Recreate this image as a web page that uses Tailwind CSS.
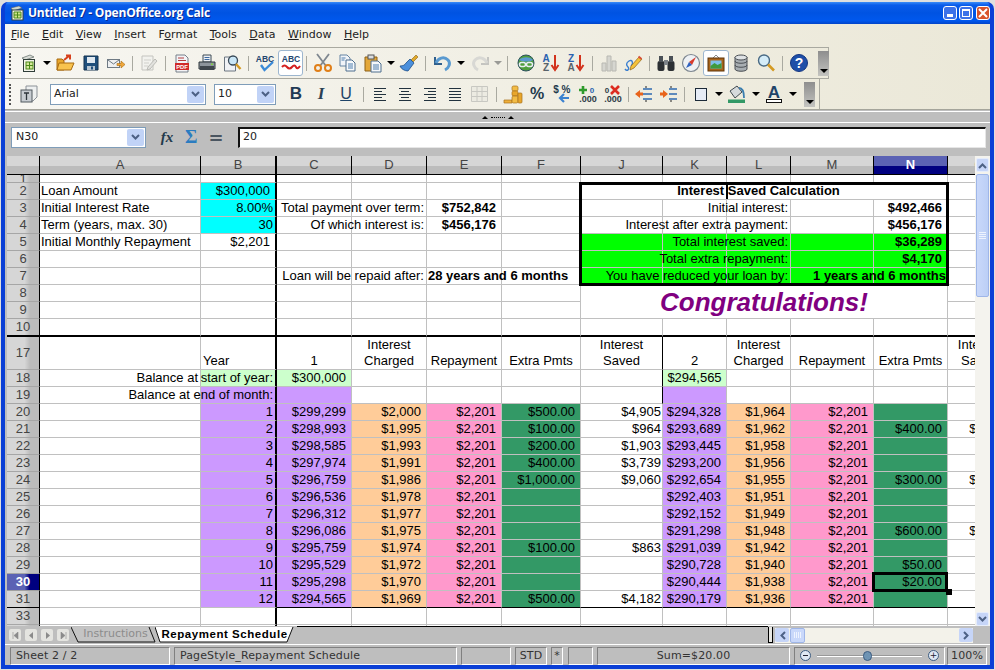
<!DOCTYPE html>
<html lang="en">
<head>
    <meta charset="UTF-8">
    <title>Untitled 7 - OpenOffice.org Calc</title>
    <script src="https://cdn.jsdelivr.net/npm/@tailwindcss/browser@4"></script>
</head>
<body class="bg-[#dfdfdf] overflow-hidden font-['DejaVu_Sans',sans-serif] text-[11px] text-[#222]">
<div class="w-[995px] h-[670px] pt-[2px] pl-[1px]">
<div class="w-[993px] h-[667px] flex flex-col rounded-t-[7px] bg-[#0a3fd6] overflow-hidden border-x-4 border-b-4 border-[#0a3fd6]">

    <!-- title bar -->
    <div class="-mx-[4px] h-[22px] flex-none flex items-center pl-[8px] pr-[4px] bg-[linear-gradient(#3a8cf8_0%,#0a5cea_14%,#0053e2_50%,#0058ee_85%,#0244c8_100%)]">
        <svg class="w-[16px] h-[16px] flex-none" viewBox="0 0 16 16"><path d="M2 3l8-2 3 2-9 3z" fill="#cfd8cf" stroke="#555" stroke-width=".5"/><rect x="3" y="5" width="11" height="10" fill="#f4f4e8" stroke="#33433a"/><path d="M5 7h7v6H5z" fill="#cfe58a" stroke="#4c8a18"/><path d="M8.5 7v6M5 10h7" stroke="#4c8a18"/></svg>
        <span class="ml-[3px] text-white font-bold text-[12px] tracking-[-.2px] font-['Open_Sans',sans-serif] [text-shadow:1px_1px_0_#0a2a90]">Untitled 7 - OpenOffice.org Calc</span>
        <div class="ml-auto flex gap-[2px]">
            <div class="w-[14px] h-[14px] rounded-[3px] border border-white bg-[#3c72e8] flex items-end pl-[3px] pb-[2px]"><div class="w-[6px] h-[3px] bg-white"></div></div>
            <div class="w-[14px] h-[14px] rounded-[3px] border border-white bg-[#3c72e8] flex items-center justify-center"><div class="w-[8px] h-[8px] border border-t-2 border-white"></div></div>
            <div class="ml-[1px] w-[14px] h-[14px] rounded-[3px] border border-white bg-[#d8532c] flex items-center justify-center"><svg class="w-[10px] h-[10px]" viewBox="0 0 10 10"><path d="M1 1l8 8M9 1l-8 8" stroke="#fff" stroke-width="2"/></svg></div>
        </div>
    </div>

    <!-- menu and toolbars share one gradient -->
    <div class="h-[86px] flex-none bg-gradient-to-r from-[#f7f6f1] to-[#ebe8d8] border-b border-[#a5a59b]">
        <div class="h-[23px] flex items-center pl-[6px] gap-[12.5px] text-[#222] text-[11px]">
            <span><u>F</u>ile</span><span><u>E</u>dit</span><span><u>V</u>iew</span><span><u>I</u>nsert</span><span>F<u>o</u>rmat</span><span><u>T</u>ools</span><span><u>D</u>ata</span><span><u>W</u>indow</span><span><u>H</u>elp</span>
        </div>

        <!-- standard toolbar -->
        <div class="w-[824px] h-[32px] flex items-center border-y border-r border-[#a9a9a0] pl-[4px]">
            <div class="flex-none w-[7px] h-[21px] border-l-2 border-dotted border-[#555]"></div>
            <div class="flex-none w-[25px] flex justify-center"><svg class="w-[20px] h-[20px]" viewBox="0 0 20 20"><path d="M3 5l8-3 4 2-9 3z" fill="#d9dcd6" stroke="#5f6a66" stroke-width=".7"/><rect x="4.5" y="6.5" width="11" height="12" fill="#f4f4ea" stroke="#2f3d38"/><rect x="7" y="9" width="7" height="7" fill="#d5e79a" stroke="#4c8a18"/><path d="M10.5 9v7M7 12.5h7" stroke="#4c8a18"/></svg></div>
            <div class="flex-none w-[11px] flex justify-center"><div class="w-0 h-0 border-x-[4px] border-t-[4px] border-x-transparent border-t-black"></div></div>
            <div class="flex-none w-[26px] flex justify-center"><svg class="w-[20px] h-[20px]" viewBox="0 0 20 20"><path d="M2 6h5l2 2v9H2z" fill="#e8a62c" stroke="#a86a10"/><path d="M4 10h15l-3 7H2z" fill="#f8c34e" stroke="#a86a10"/><path d="M9 7l5-4M11 2.500h4v4" fill="none" stroke="#d6401c" stroke-width="2"/></svg></div>
            <div class="flex-none w-[25px] flex justify-center"><svg class="w-[20px] h-[20px]" viewBox="0 0 20 20"><path d="M3 3h14v14H3z" fill="#1f4f7c" stroke="#14324f"/><rect x="6" y="4" width="8" height="6" fill="#dfe8f0"/><rect x="6" y="13" width="8" height="4" fill="#b8c6d2"/><rect x="10" y="13.500" width="2" height="3" fill="#1f4f7c"/></svg></div>
            <div class="flex-none w-[25px] flex justify-center"><svg class="w-[20px] h-[20px]" viewBox="0 0 20 20"><rect x="1.500" y="6.500" width="12" height="8" fill="#eef0f2" stroke="#6f7a84"/><path d="M2 7l5.500 4L13 7" fill="none" stroke="#6f7a84"/><path d="M11 10.500h4V8l4 3.500-4 3.500v-2.500h-4z" fill="#f0a83a" stroke="#a86a10" stroke-width=".6"/></svg></div>
            <div class="flex-none w-[8px] flex justify-center"><div class="w-px h-[15px] bg-[#a9a9a0]"></div></div>
            <div class="flex-none w-[25px] flex justify-center"><svg class="w-[20px] h-[20px]" viewBox="0 0 20 20"><path d="M3 3h11v14H3z" fill="#f2f2ee" stroke="#c4c4bf"/><path d="M5 7h7M5 10h5M5 13h4" stroke="#d0d0cb"/><path d="M9 14l7-8 2 2-7 8-3 1z" fill="#e2e2de" stroke="#bcbcb7"/></svg></div>
            <div class="flex-none w-[8px] flex justify-center"><div class="w-px h-[15px] bg-[#a9a9a0]"></div></div>
            <div class="flex-none w-[25px] flex justify-center"><svg class="w-[20px] h-[20px]" viewBox="0 0 20 20"><path d="M4 2h9l3 3v14H4z" fill="#f3f3f6" stroke="#77808a"/><path d="M6 5h6M6 7.500h8" stroke="#b43c3c"/><rect x="3" y="10" width="14" height="7" fill="#d02a2a"/><text x="10" y="15.800" text-anchor="middle" font-size="5.800" font-weight="700" fill="#fff" font-family="Liberation Sans">PDF</text></svg></div>
            <div class="flex-none w-[25px] flex justify-center"><svg class="w-[20px] h-[20px]" viewBox="0 0 20 20"><path d="M6 2h8v7H6z" fill="#eef1f5" stroke="#3d4a55"/><path d="M7.500 4.500h5M7.500 6.500h5" stroke="#3d6aa0"/><path d="M2 9h16v7H2z" fill="#8d949b" stroke="#2e363c"/><path d="M3 13h14v4H3z" fill="#3f464c"/><rect x="14" y="10.500" width="2" height="1.500" fill="#7fd040"/></svg></div>
            <div class="flex-none w-[25px] flex justify-center"><svg class="w-[20px] h-[20px]" viewBox="0 0 20 20"><path d="M2.500 4h9l2 2v12h-11z" fill="#f0f2f5" stroke="#6c7680"/><circle cx="11" cy="7.500" r="4.500" fill="#c9e6f6" stroke="#3a4a58" stroke-width="1.300"/><path d="M14 11l4.500 5" stroke="#d49a22" stroke-width="2.400"/></svg></div>
            <div class="flex-none w-[8px] flex justify-center"><div class="w-px h-[15px] bg-[#a9a9a0]"></div></div>
            <div class="flex-none w-[26px] flex justify-center"><svg class="w-[22px] h-[20px]" viewBox="0 0 22 20"><text x="11" y="9" text-anchor="middle" font-size="8.500" font-weight="700" fill="#24466f" font-family="Liberation Sans">ABC</text><path d="M7 12l3.500 5L19 9" fill="none" stroke="#3b8ad8" stroke-width="2.400"/></svg></div>
            <div class="flex-none w-[25px] h-[26px] rounded-[3px] border border-[#9db6cf] bg-white flex justify-center items-center"><svg class="w-[22px] h-[20px]" viewBox="0 0 22 20"><text x="11" y="9" text-anchor="middle" font-size="8.500" font-weight="700" fill="#24466f" font-family="Liberation Sans">ABC</text><path d="M2 14q2.500-3 5 0t5 0 4 0 4-1" fill="none" stroke="#d42020" stroke-width="2"/></svg></div>
            <div class="flex-none w-[7px] flex justify-center"><div class="w-px h-[15px] bg-[#a9a9a0]"></div></div>
            <div class="flex-none w-[25px] flex justify-center"><svg class="w-[20px] h-[20px]" viewBox="0 0 20 20"><path d="M4 1l9 12M16 1L7 13" stroke="#808890" stroke-width="1.800"/><circle cx="5" cy="15" r="3" fill="none" stroke="#e07f18" stroke-width="2"/><circle cx="15" cy="15" r="3" fill="none" stroke="#e07f18" stroke-width="2"/></svg></div>
            <div class="flex-none w-[25px] flex justify-center"><svg class="w-[20px] h-[20px]" viewBox="0 0 20 20"><path d="M2 2h7l3 3v8H2z" fill="#f1f4f8" stroke="#6583a2"/><path d="M8 7h6l3 3v8H8z" fill="#f7f9fb" stroke="#4e6e8e"/><path d="M3.500 5h4M3.500 7h3M10 11h5M10 13h5M10 15h5" stroke="#4e7fae"/></svg></div>
            <div class="flex-none w-[25px] flex justify-center"><svg class="w-[20px] h-[20px]" viewBox="0 0 20 20"><path d="M2 4h12v14H2z" fill="#e4a83a" stroke="#8c6118"/><rect x="5" y="2" width="6" height="4" fill="#dadde0" stroke="#555"/><path d="M8 8h7l3 3v8H8z" fill="#f4f7fa" stroke="#4e6e8e"/><path d="M10 12h6M10 14h6M10 16h6" stroke="#4e7fae"/></svg></div>
            <div class="flex-none w-[11px] flex justify-center"><div class="w-0 h-0 border-x-[4px] border-t-[4px] border-x-transparent border-t-black"></div></div>
            <div class="flex-none w-[25px] flex justify-center"><svg class="w-[20px] h-[20px]" viewBox="0 0 20 20"><path d="M17 2l2 2-5 5-2-2z" fill="#e0a92a" stroke="#8c6118" stroke-width=".6"/><path d="M11 6l4 4-6 8c-3 0-7-2-8-5 3 0 5-1 6-3z" fill="#4c90dc" stroke="#1f4f88" stroke-width=".8"/></svg></div>
            <div class="flex-none w-[9px] flex justify-center"><div class="w-px h-[15px] bg-[#a9a9a0]"></div></div>
            <div class="flex-none w-[25px] flex justify-center"><svg class="w-[20px] h-[20px]" viewBox="0 0 20 20"><path d="M2 4v7h7" fill="none" stroke="#2f5f8c" stroke-width="2"/><path d="M3 10c2-5 8-7 12-3 3 3 1 8-3 10" fill="none" stroke="#5a9ad0" stroke-width="3"/></svg></div>
            <div class="flex-none w-[11px] flex justify-center"><div class="w-0 h-0 border-x-[4px] border-t-[4px] border-x-transparent border-t-black"></div></div>
            <div class="flex-none w-[27px] flex justify-center"><svg class="w-[20px] h-[20px]" viewBox="0 0 20 20"><path d="M18 4v7h-7" fill="none" stroke="#c4c4c0" stroke-width="2"/><path d="M17 10C15 5 9 3 5 7c-3 3-1 8 3 10" fill="none" stroke="#d8d8d4" stroke-width="3"/></svg></div>
            <div class="flex-none w-[9px] flex justify-center"><div class="w-0 h-0 border-x-[4px] border-t-[4px] border-x-transparent border-t-[#9a9a96]"></div></div>
            <div class="flex-none w-[11px] flex justify-center"><div class="w-px h-[15px] bg-[#a9a9a0]"></div></div>
            <div class="flex-none w-[25px] flex justify-center"><svg class="w-[20px] h-[20px]" viewBox="0 0 20 20"><circle cx="10" cy="10" r="8" fill="#4f9e3c" stroke="#2c4f60"/><path d="M3 7c3-3 10-4 14 0-3 2-10 2-14 0z" fill="#5a9ad0"/><rect x="3.500" y="9.500" width="6" height="4" rx="2" fill="none" stroke="#e8eef2" stroke-width="1.500"/><rect x="10.500" y="9.500" width="6" height="4" rx="2" fill="none" stroke="#e8eef2" stroke-width="1.500"/></svg></div>
            <div class="flex-none w-[25px] flex justify-center"><svg class="w-[20px] h-[20px]" viewBox="0 0 20 20"><text x="5" y="8.500" text-anchor="middle" font-size="10" font-weight="700" fill="#2a62b0" font-family="Liberation Sans">A</text><text x="5" y="18" text-anchor="middle" font-size="10" font-weight="700" fill="#59636b" font-family="Liberation Sans">Z</text><path d="M14 2v13M10.500 12l3.500 5 3.500-5" fill="none" stroke="#d2321c" stroke-width="2"/></svg></div>
            <div class="flex-none w-[25px] flex justify-center"><svg class="w-[20px] h-[20px]" viewBox="0 0 20 20"><text x="5" y="8.500" text-anchor="middle" font-size="10" font-weight="700" fill="#2a62b0" font-family="Liberation Sans">Z</text><text x="5" y="18" text-anchor="middle" font-size="10" font-weight="700" fill="#59636b" font-family="Liberation Sans">A</text><path d="M14 2v13M10.500 12l3.500 5 3.500-5" fill="none" stroke="#d2321c" stroke-width="2"/></svg></div>
            <div class="flex-none w-[8px] flex justify-center"><div class="w-px h-[15px] bg-[#a9a9a0]"></div></div>
            <div class="flex-none w-[25px] flex justify-center"><svg class="w-[20px] h-[20px]" viewBox="0 0 20 20"><path d="M3 10h4v8H3zM8 3h4v15H8zM13 8h4v10h-4z" fill="#d6d6d0" stroke="#b8b8b2"/></svg></div>
            <div class="flex-none w-[24px] flex justify-center"><svg class="w-[20px] h-[20px]" viewBox="0 0 20 20"><path d="M2 16c2 3 5 0 3-2s-2-4 1-6 5 2 2 5" fill="none" stroke="#3b7fd0" stroke-width="1.400"/><path d="M8 13l8-9 3 2-8 9-4 2z" fill="#f4c23a" stroke="#8c6118" stroke-width=".7"/><path d="M15.500 3.500l3 2.500" stroke="#d8503a" stroke-width="2"/></svg></div>
            <div class="flex-none w-[8px] flex justify-center"><div class="w-px h-[15px] bg-[#a9a9a0]"></div></div>
            <div class="flex-none w-[25px] flex justify-center"><svg class="w-[20px] h-[20px]" viewBox="0 0 20 20"><rect x="1.500" y="8" width="7" height="10" rx="2" fill="#2c3034"/><rect x="11.500" y="8" width="7" height="10" rx="2" fill="#2c3034"/><rect x="3" y="3" width="4" height="6" fill="#4a5056"/><rect x="13" y="3" width="4" height="6" fill="#4a5056"/><rect x="8" y="7" width="4" height="5" fill="#7c8288"/></svg></div>
            <div class="flex-none w-[25px] flex justify-center"><svg class="w-[20px] h-[20px]" viewBox="0 0 20 20"><circle cx="10" cy="10" r="8.500" fill="#eef1f4" stroke="#7e8790" stroke-width="1.200"/><path d="M15 4l-4 8-3-3z" fill="#d83a2c"/><path d="M5 15l3-6 3 3z" fill="#2f62c0"/></svg></div>
            <div class="flex-none w-[26px] h-[26px] rounded-[3px] border border-[#9db6cf] bg-white flex justify-center items-center"><svg class="w-[20px] h-[20px]" viewBox="0 0 20 20"><path d="M7 5l3-3 3 3" fill="none" stroke="#8c8c8c"/><rect x="2" y="5" width="16" height="13" fill="#a8641c" stroke="#5e3408"/><rect x="4.500" y="7.500" width="11" height="8" fill="#7fc0e8"/><path d="M4.500 13l4-3 3 2 4-2v5.500h-11z" fill="#3f9a3c"/></svg></div>
            <div class="flex-none w-[24px] flex justify-center"><svg class="w-[20px] h-[20px]" viewBox="0 0 20 20"><path d="M4 4v12c0 3 12 3 12 0V4z" fill="#a8aeb2" stroke="#4a4f54"/><ellipse cx="10" cy="4.500" rx="6" ry="2.500" fill="#dfe2e4" stroke="#4a4f54"/><path d="M4 8c0 3 12 3 12 0M4 12c0 3 12 3 12 0" fill="none" stroke="#4a4f54"/></svg></div>
            <div class="flex-none w-[25px] flex justify-center"><svg class="w-[20px] h-[20px]" viewBox="0 0 20 20"><circle cx="8" cy="7.500" r="5.500" fill="#d4ecf8" stroke="#4a6a84" stroke-width="1.400"/><path d="M12 11.500l6 6" stroke="#d49a22" stroke-width="2.600"/></svg></div>
            <div class="flex-none w-[8px] flex justify-center"><div class="w-px h-[15px] bg-[#a9a9a0]"></div></div>
            <div class="flex-none w-[25px] flex justify-center"><svg class="w-[20px] h-[20px]" viewBox="0 0 20 20"><circle cx="10" cy="10" r="8.500" fill="#1f4fa8" stroke="#143680"/><text x="10" y="15" text-anchor="middle" font-size="14" font-weight="700" fill="#fff" font-family="Liberation Sans">?</text></svg></div>
            <div class="flex-none ml-[7px] w-[11px] h-[25px] bg-gradient-to-b from-[#8e8e8e] to-[#c4c4c0] flex items-end justify-center pb-[3px]"><div class="w-0 h-0 border-x-[4px] border-t-[4px] border-x-transparent border-t-black"></div></div>
        </div>

        <!-- formatting toolbar -->
        <div class="w-[815px] h-[30px] flex items-center border-r border-[#a9a9a0] pl-[4px]">
            <div class="flex-none w-[7px] h-[21px] border-l-2 border-dotted border-[#555]"></div>
            <div class="flex-none w-[25px] flex justify-center"><svg class="w-[20px] h-[20px]" viewBox="0 0 20 20"><path d="M7 2h11v11l-4 4H7z" fill="#eef0f0" stroke="#8c9298"/><rect x="2" y="6" width="11" height="12" fill="#c8cdd2" stroke="#50585e"/><path d="M5 9h5M7.500 9v7" stroke="#2f363c" stroke-width="1.300"/></svg></div>
            <div class="flex-none ml-[9px] w-[156px] h-[21px] bg-white border border-[#7f9db9] flex items-center pl-[3px] text-[11px]">Arial
                <div class="ml-auto mr-[1px] w-[17px] h-[17px] rounded-[2px] bg-[#c1d3f7] flex items-center justify-center"><svg class="w-[9px] h-[7px]" viewBox="0 0 9 7"><path d="M1 1l3.500 3.500L8 1" fill="none" stroke="#4d6185" stroke-width="2"/></svg></div>
            </div>
            <div class="flex-none ml-[8px] w-[62px] h-[21px] bg-white border border-[#7f9db9] flex items-center pl-[3px] text-[11px]">10
                <div class="ml-auto mr-[1px] w-[17px] h-[17px] rounded-[2px] bg-[#c1d3f7] flex items-center justify-center"><svg class="w-[9px] h-[7px]" viewBox="0 0 9 7"><path d="M1 1l3.500 3.500L8 1" fill="none" stroke="#4d6185" stroke-width="2"/></svg></div>
            </div>
            <div class="flex-none ml-[7px] w-[26px] text-center font-bold text-[#1f3a55] text-[17px] font-['Liberation_Sans',sans-serif]">B</div>
            <div class="flex-none w-[24px] text-center italic font-bold text-[#2a3f52] text-[17px] font-['Liberation_Serif',serif]">I</div>
            <div class="flex-none w-[26px] text-center underline text-[#1f4468] text-[16px] font-['Liberation_Sans',sans-serif]">U</div>
            <div class="flex-none w-[8px] flex justify-center"><div class="w-px h-[15px] bg-[#a9a9a0]"></div></div>
            <div class="flex-none w-[25px] flex justify-center"><svg class="w-[14px] h-[14px]" viewBox="0 0 14 14"><path d="M1 1.500h12M1 4.500h8M1 7.500h12M1 10.500h8M1 13.500h12" stroke="#22323e"/></svg></div>
            <div class="flex-none w-[25px] flex justify-center"><svg class="w-[14px] h-[14px]" viewBox="0 0 14 14"><path d="M1 1.500h12M3 4.500h8M1 7.500h12M3 10.500h8M1 13.500h12" stroke="#22323e"/></svg></div>
            <div class="flex-none w-[25px] flex justify-center"><svg class="w-[14px] h-[14px]" viewBox="0 0 14 14"><path d="M1 1.500h12M5 4.500h8M1 7.500h12M5 10.500h8M1 13.500h12" stroke="#22323e"/></svg></div>
            <div class="flex-none w-[25px] flex justify-center"><svg class="w-[14px] h-[14px]" viewBox="0 0 14 14"><path d="M1 1.500h12M1 4.500h12M1 7.500h12M1 10.500h12M1 13.500h12" stroke="#22323e"/></svg></div>
            <div class="flex-none w-[25px] flex justify-center"><svg class="w-[17px] h-[16px]" viewBox="0 0 17 16"><path d="M.5 .5h16v15H.5zM.5 5.500h16M.5 10.500h16M6 .5v15M11 .5v15" fill="#ecebe2" stroke="#c8c8c2"/></svg></div>
            <div class="flex-none w-[8px] flex justify-center"><div class="w-px h-[15px] bg-[#a9a9a0]"></div></div>
            <div class="flex-none w-[25px] flex justify-center"><svg class="w-[20px] h-[20px]" viewBox="0 0 20 20"><path d="M1 16h8v3H1z" fill="#eeb03c" stroke="#a8701a" stroke-width=".7"/><rect x="9" y="2" width="6" height="5" rx="1.500" fill="#f2bc46" stroke="#a8701a" stroke-width=".7"/><rect x="9" y="7" width="6" height="5" rx="1.500" fill="#e8a62c" stroke="#a8701a" stroke-width=".7"/><rect x="9" y="12" width="6" height="7" rx="1.500" fill="#f2bc46" stroke="#a8701a" stroke-width=".7"/><rect x="15" y="9" width="4" height="10" rx="1" fill="#e8a62c" stroke="#a8701a" stroke-width=".7"/></svg></div>
            <div class="flex-none w-[24px] text-center font-bold text-[#233a4c] text-[16px] font-['Liberation_Sans',sans-serif]">%</div>
            <div class="flex-none w-[26px] flex justify-center"><svg class="w-[22px] h-[20px]" viewBox="0 0 22 20"><text x="5" y="9" text-anchor="middle" font-size="10" font-weight="700" fill="#233a4c" font-family="Liberation Sans">$</text><text x="15" y="9" text-anchor="middle" font-size="10" font-weight="700" fill="#233a4c" font-family="Liberation Sans">%</text><path d="M18 14h-8M13 10l-4 4 4 4" fill="none" stroke="#3b82d0" stroke-width="2.200"/></svg></div>
            <div class="flex-none w-[25px] flex justify-center"><svg class="w-[22px] h-[20px]" viewBox="0 0 22 20"><path d="M6 2v8M2 6h8" stroke="#2f9a2c" stroke-width="2.600"/><text x="15" y="9" text-anchor="middle" font-size="8" font-weight="700" fill="#2a62b0" font-family="Liberation Sans">0</text><text x="11" y="18" text-anchor="middle" font-size="9" font-weight="700" fill="#2e3c46" font-family="Liberation Sans">.000</text></svg></div>
            <div class="flex-none w-[25px] flex justify-center"><svg class="w-[22px] h-[20px]" viewBox="0 0 22 20"><text x="5" y="9" text-anchor="middle" font-size="8" font-weight="700" fill="#2e3c46" font-family="Liberation Sans">0</text><path d="M9 2l8 8M17 2l-8 8" stroke="#dc2c20" stroke-width="2.600"/><text x="11" y="18" text-anchor="middle" font-size="9" font-weight="700" fill="#2e3c46" font-family="Liberation Sans">.000</text></svg></div>
            <div class="flex-none w-[6px] flex justify-center"><div class="w-px h-[15px] bg-[#a9a9a0]"></div></div>
            <div class="flex-none w-[25px] flex justify-center"><svg class="w-[20px] h-[20px]" viewBox="0 0 20 20"><path d="M1 10l5-4v2.500h3v3H6V14z" fill="#e8641c"/><path d="M9 5h9M9 10h9M9 15h9" stroke="#2f6ab0" stroke-width="1.500"/><path d="M12 2v2M12 16v2" stroke="#222"/></svg></div>
            <div class="flex-none w-[25px] flex justify-center"><svg class="w-[20px] h-[20px]" viewBox="0 0 20 20"><path d="M9 10L4 6v2.500H1v3h3V14z" fill="#e8641c"/><path d="M10 5h8M10 10h8M10 15h8" stroke="#2f6ab0" stroke-width="1.500"/><path d="M12 2v2M12 16v2" stroke="#222"/></svg></div>
            <div class="flex-none w-[7px] flex justify-center"><div class="w-px h-[15px] bg-[#a9a9a0]"></div></div>
            <div class="flex-none w-[25px] flex justify-center"><div class="w-[12px] h-[13px] bg-[#e6ecf6] border border-[#1c2a38]"></div></div>
            <div class="flex-none w-[11px] flex justify-center"><div class="w-0 h-0 border-x-[4px] border-t-[4px] border-x-transparent border-t-black"></div></div>
            <div class="flex-none w-[26px] flex justify-center"><svg class="w-[20px] h-[20px]" viewBox="0 0 20 20"><path d="M3 7l7-5 5 6-7 6z" fill="#d6dadc" stroke="#404a50"/><path d="M12 4c3 0 5 3 5 10" fill="none" stroke="#3b7fb0" stroke-width="1.800"/><rect x="1" y="15.500" width="17" height="3.500" fill="#339966"/></svg></div>
            <div class="flex-none w-[11px] flex justify-center"><div class="w-0 h-0 border-x-[4px] border-t-[4px] border-x-transparent border-t-black"></div></div>
            <div class="flex-none w-[26px] flex justify-center"><svg class="w-[20px] h-[20px]" viewBox="0 0 20 20"><text x="10" y="13.500" text-anchor="middle" font-size="17" font-weight="700" fill="#1f4468" font-family="Liberation Sans">A</text><rect x="2.500" y="15.500" width="15" height="3" fill="#fff" stroke="#111"/></svg></div>
            <div class="flex-none w-[11px] flex justify-center"><div class="w-0 h-0 border-x-[4px] border-t-[4px] border-x-transparent border-t-black"></div></div>
            <div class="flex-none ml-[6px] w-[11px] h-[25px] bg-gradient-to-b from-[#8e8e8e] to-[#c4c4c0] flex items-end justify-center pb-[3px]"><div class="w-0 h-0 border-x-[4px] border-t-[4px] border-x-transparent border-t-black"></div></div>
        </div>
    </div>

    <div class="flex-1 min-h-0 flex flex-col bg-[#bebebe]">
        <!-- splitter -->
        <div class="h-[12px] flex-none border-t border-white mt-[1px] border-b relative flex items-center justify-center gap-[3px] text-[5px] text-black">
            <div class="w-0 h-0 border-x-[3px] border-b-[3px] border-x-transparent border-b-black"></div>
            <div class="w-[14px] h-px border-t border-dotted border-black"></div>
            <div class="w-0 h-0 border-x-[3px] border-b-[3px] border-x-transparent border-b-black"></div>
        </div>

        <!-- formula bar -->
        <div class="h-[31px] flex-none flex items-center pl-[6px] pr-[4px] pb-[3px] text-[11px]">
            <div class="w-[135px] h-[21px] bg-white border border-[#7f9db9] flex items-center pl-[4px]">N30
                <div class="ml-auto mr-[1px] w-[17px] h-[17px] rounded-[2px] bg-[#c1d3f7] flex items-center justify-center"><svg class="w-[9px] h-[7px]" viewBox="0 0 9 7"><path d="M1 1l3.500 3.500L8 1" fill="none" stroke="#4d6185" stroke-width="2"/></svg></div>
            </div>
            <div class="w-[38px] ml-[2px] text-center italic font-bold text-[#233a4c] text-[15px] font-['Liberation_Serif',serif]">fx</div>
            <div class="w-[10px] -ml-[1px] text-center font-bold text-[#2b7cc0] text-[19px] font-['Liberation_Serif',serif]">Σ</div>
            <div class="w-[42px] text-center font-bold text-[#4a5560] text-[18px]">=</div>
            <div class="ml-[1px] flex-1 h-[21px] bg-white border-t-2 border-l-2 border-[#111] border-b border-r border-b-[#e6e6e6] border-r-[#e6e6e6] flex items-center pl-[3px]">20</div>
        </div>

        <!-- sheet + vertical scrollbar -->
        <div class="h-[472px] flex-none flex pl-[2px] pt-[2px]">
            <div class="w-[968px] h-[470px] relative overflow-hidden bg-white font-['Liberation_Sans',sans-serif] text-[13px] text-black">
                <table id="grid" class="table-fixed w-[1005px] border-separate border-spacing-0 leading-[16px]">
                    <colgroup>
                        <col class="w-[33px]"><col class="w-[161px]"><col class="w-[76px]"><col class="w-[75px]"><col class="w-[75px]"><col class="w-[75px]"><col class="w-[79px]"><col class="w-[82px]"><col class="w-[64px]"><col class="w-[64px]"><col class="w-[83px]"><col class="w-[74px]"><col class="w-[64px]">
                    </colgroup>
                    <tbody id="rows"></tbody>
                </table>
                <!-- calculation box and cell cursor sit over the table -->
                <div class="absolute left-[572px] top-[26px] w-[370px] h-[104px] border-[3px] border-black pointer-events-none"></div>
                <div class="absolute left-[719px] top-[26px] w-[2px] h-[17px] bg-black"></div>
                <div class="absolute left-[865px] top-[416px] w-[76px] h-[20px] border-[3px] border-black"></div>
                <div class="absolute left-[939px] top-[433px] w-[6px] h-[6px] bg-black"></div>
            </div>
            <div class="w-[15px] h-[470px] bg-[#f4f3ee] flex flex-col items-center pt-[2px]">
                <div class="w-[13px] h-[14px] rounded-[2px] bg-[#c6d5f8] border border-[#e6edfc] flex items-center justify-center"><svg class="w-[9px] h-[7px]" viewBox="0 0 9 7"><path d="M1 6l3.500-3.500L8 6" fill="none" stroke="#4d6185" stroke-width="2"/></svg></div>
                <div class="mt-[2px] w-[13px] h-[123px] rounded-[2px] bg-gradient-to-r from-[#c9d8fa] to-[#bccff6] border border-[#9fb6e8] flex flex-col gap-[1px] items-center justify-center">
                    <div class="w-[7px] h-px bg-[#eef3fe]"></div><div class="w-[7px] h-px bg-[#eef3fe]"></div><div class="w-[7px] h-px bg-[#eef3fe]"></div><div class="w-[7px] h-px bg-[#eef3fe]"></div>
                </div>
                <div class="mt-auto w-[13px] h-[14px] rounded-[2px] bg-[#c6d5f8] border border-[#e6edfc] flex items-center justify-center"><svg class="w-[9px] h-[7px]" viewBox="0 0 9 7"><path d="M1 1l3.500 3.500L8 1" fill="none" stroke="#4d6185" stroke-width="2"/></svg></div>
            </div>
        </div>

        <!-- sheet tabs + horizontal scrollbar -->
        <div class="h-[18px] flex-none flex items-center pl-[4px] pr-[17px]">
            <div class="flex gap-[4px] items-center">
                <div class="w-[12px] h-[12px] rounded-[2px] bg-[#e4e4e0] flex items-center justify-center"><svg class="w-[7px] h-[7px]" viewBox="0 0 7 7"><path d="M1 0v7M6 0v7L2 3.500z" fill="#8a8a8a" stroke="#8a8a8a" stroke-width=".6"/></svg></div>
                <div class="w-[12px] h-[12px] rounded-[2px] bg-[#e4e4e0] flex items-center justify-center"><svg class="w-[7px] h-[7px]" viewBox="0 0 7 7"><path d="M5 0v7L1 3.500z" fill="#8a8a8a"/></svg></div>
                <div class="w-[12px] h-[12px] rounded-[2px] bg-[#e4e4e0] flex items-center justify-center"><svg class="w-[7px] h-[7px]" viewBox="0 0 7 7"><path d="M2 0v7l4-3.500z" fill="#8a8a8a"/></svg></div>
                <div class="w-[12px] h-[12px] rounded-[2px] bg-[#e4e4e0] flex items-center justify-center"><svg class="w-[7px] h-[7px]" viewBox="0 0 7 7"><path d="M6 0v7M1 0v7l4-3.500z" fill="#8a8a8a" stroke="#8a8a8a" stroke-width=".6"/></svg></div>
            </div>
            <div class="relative flex-none ml-[2px] w-[87px] h-[16px] flex items-center justify-center text-[#8c8c8c] text-[11px] -mt-[1px]">
                <svg class="absolute inset-0 w-full h-full" viewBox="0 0 87 16"><path d="M0 0L7 15H84L78 0" fill="#c4c4c4" stroke="#111"/></svg>
                <span class="relative ml-[2px]">Instructions</span>
            </div>
            <div class="relative flex-none -ml-[3px] w-[142px] h-[16px] flex items-center justify-center text-black font-bold font-['Liberation_Sans',sans-serif] text-[11.5px] tracking-[.55px] -mt-[1px]">
                <svg class="absolute inset-0 w-full h-full" viewBox="0 0 142 16"><path d="M0 0L5 15H132L138 0" fill="#fff" stroke="#111"/></svg>
                <span class="relative -ml-[3px]">Repayment Schedule</span>
            </div>
            <div class="flex-1 h-[17px] border-t border-black -mt-[1px]"></div>
            <div class="w-[5px] h-[16px] bg-[#e8e8e4] border border-black border-t-0"></div>
            <div class="w-[198px] h-[15px] bg-[#f3f2ea] ml-[2px] flex items-center">
                <div class="w-[14px] h-[14px] rounded-[2px] bg-[#c6d5f8] flex items-center justify-center"><svg class="w-[7px] h-[9px]" viewBox="0 0 7 9"><path d="M6 1L2.500 4.500 6 8" fill="none" stroke="#4d6185" stroke-width="2"/></svg></div>
                <div class="ml-[1px] w-[15px] h-[15px] rounded-[2px] bg-[#c9d8fa] border border-[#9fb6e8] flex gap-px items-center justify-center"><div class="w-px h-[6px] bg-[#eef3fe]"></div><div class="w-px h-[6px] bg-[#eef3fe]"></div><div class="w-px h-[6px] bg-[#eef3fe]"></div><div class="w-px h-[6px] bg-[#eef3fe]"></div></div>
                <div class="ml-auto w-[14px] h-[14px] rounded-[2px] bg-[#c6d5f8] flex items-center justify-center"><svg class="w-[7px] h-[9px]" viewBox="0 0 7 9"><path d="M1 1l3.500 3.500L1 8" fill="none" stroke="#4d6185" stroke-width="2"/></svg></div>
            </div>
        </div>

        <!-- status bar -->
        <div class="h-[22px] flex-none flex items-center border-t border-white pl-[5px] text-[11px] tracking-[.12px] text-[#333]">
            <div class="w-[160px] h-[18px] border border-t-[#808080] border-l-[#808080] border-b-white border-r-white pl-[5px] leading-[16px]">Sheet 2 / 2</div>
            <div class="ml-[4px] w-[283px] h-[18px] border border-t-[#808080] border-l-[#808080] border-b-white border-r-white pl-[5px] leading-[16px]">PageStyle_Repayment Schedule</div>
            <div class="ml-[4px] w-[50px] h-[18px] border border-t-[#808080] border-l-[#808080] border-b-white border-r-white"></div>
            <div class="ml-[4px] w-[32px] h-[18px] border border-t-[#808080] border-l-[#808080] border-b-white border-r-white text-center leading-[16px]">STD</div>
            <div class="ml-[4px] w-[12px] h-[18px] border border-t-[#808080] border-l-[#808080] border-b-white border-r-white text-center leading-[16px]">*</div>
            <div class="ml-[5px] w-[25px] h-[18px] border border-t-[#808080] border-l-[#808080] border-b-white border-r-white"></div>
            <div class="ml-[4px] w-[193px] h-[18px] border border-t-[#808080] border-l-[#808080] border-b-white border-r-white text-center leading-[16px]">Sum=$20.00</div>
            <div class="ml-[4px] w-[151px] h-[18px] border border-t-[#808080] border-l-[#808080] border-b-white border-r-white flex items-center px-[5px]">
                <div class="w-[11px] h-[11px] rounded-full bg-[#dfe8f4] border border-[#3d5c80] flex items-center justify-center"><div class="w-[5px] h-px bg-[#223]"></div></div>
                <div class="relative mx-[6px] flex-1 h-[2px] bg-white border-t border-[#999]"><div class="absolute left-[46px] -top-[5px] w-[9px] h-[10px] rounded-full bg-[#6f94b4] border border-[#3d5c80]"></div></div>
                <div class="w-[11px] h-[11px] rounded-full bg-[#dfe8f4] border border-[#3d5c80] text-center text-[9px] leading-[9px] text-[#223]">+</div>
            </div>
            <div class="ml-[2px] w-[40px] h-[18px] border border-t-[#808080] border-l-[#808080] border-b-white border-r-white text-center leading-[16px]">100%</div>
        </div>
    </div>
</div>
</div>

<script>
    const cols = ["A", "B", "C", "D", "E", "F", "J", "K", "L", "M", "N", "O"];

    // right padding for the accounting format vs plain text
    const money = "justify-end pr-[5px]";
    const right = "justify-end pr-[2px]";
    const left = "justify-start pl-[1px]";
    const center = "justify-center";

    const cyan = "bg-[#00ffff]", lime = "bg-[#00ff00]", mint = "bg-[#ccffcc]", purple = "bg-[#cc99ff]";
    const orange = "bg-[#ffcc99]", pink = "bg-[#ff99cc]", green = "bg-[#339966]";

    function c(text, align, fill, bold) {
        return { text: text, align: align, fill: fill || "", bold: bold ? "font-bold" : "" };
    }

    const sheetRows = [
        { n: "1", td: "h-[8px]", inner: "h-[7px] overflow-hidden", cells: {} },
        { n: "2", cells: { A: c("Loan Amount", left), B: c("$300,000", money, cyan), J: { span: 5, text: "Interest Saved Calculation", align: "justify-center pr-[11px]", fill: "", bold: "font-bold" }, K: null, L: null, M: null, N: null } },
        { n: "3", cells: { A: c("Initial Interest Rate", left), B: c("8.00%", right, cyan), D: c("Total payment over term:", right), E: c("$752,842", money, "", 1), L: c("Initial interest:", right), N: c("$492,466", money, "", 1) } },
        { n: "4", cells: { A: c("Term (years, max. 30)", left), B: c("30", right, cyan), D: c("Of which interest is:", right), E: c("$456,176", money, "", 1), L: c("Interest after extra payment:", right), N: c("$456,176", money, "", 1) } },
        { n: "5", cells: { A: c("Initial Monthly Repayment", left), B: c("$2,201", money), J: c("", left, lime), K: c("", left, lime), L: c("Total interest saved:", right, lime), M: c("", left, lime), N: c("$36,289", money, lime, 1) } },
        { n: "6", cells: { J: c("", left, lime), K: c("", left, lime), L: c("Total extra repayment:", right, lime), M: c("", left, lime), N: c("$4,170", money, lime, 1) } },
        { n: "7", cells: { D: c("Loan will be repaid after:", right), E: c("28 years and 6 months", left, "", 1), J: c("", left, lime), K: c("", left, lime), L: c("You have reduced your loan by:", right, lime), M: c("", left, lime), N: c("1 years and 6 months", "justify-end pr-px", lime, 1) } },
        { n: "8", cells: { J: { span: 5, rows: 2, congrats: true }, K: null, L: null, M: null, N: null } },
        { n: "9", cells: { J: null, K: null, L: null, M: null, N: null } },
        { n: "10", td: "h-[18px] border-b-2 border-b-black", cells: {} },
        { n: "17", td: "h-[33px]", inner: "h-[32px] items-end", cells: {
            B: c("Year", "justify-start pl-[2px]"), C: c("1", center), D: c("Interest<br>Charged", center), E: c("Repayment", center), F: c("Extra Pmts", center),
            J: c("Interest<br>Saved", center), K: c("2", center), L: c("Interest<br>Charged", center), M: c("Repayment", center), N: c("Extra Pmts", center), O: c("Interest<br>Saved", center)
        } },
        { n: "18", cells: { A: c("Balance at", right), B: c("start of year:", right, mint), C: c("$300,000", money, mint), K: c("$294,565", center, mint) } },
        { n: "19", cells: { B: c("Balance at end of month:", right, purple), C: c("", left, purple), K: c("", left, purple) } },
    ];

    // first and second year, one line per month
    const months = [
        ["1", "$299,299", "$2,000", "$500.00", "$4,905", "$294,328", "$1,964", "", ""],
        ["2", "$298,993", "$1,995", "$100.00", "$964", "$293,689", "$1,962", "$400.00", "$3,539"],
        ["3", "$298,585", "$1,993", "$200.00", "$1,903", "$293,445", "$1,958", "", ""],
        ["4", "$297,974", "$1,991", "$400.00", "$3,739", "$293,200", "$1,956", "", ""],
        ["5", "$296,759", "$1,986", "$1,000.00", "$9,060", "$292,654", "$1,955", "$300.00", "$2,600"],
        ["6", "$296,536", "$1,978", "", "", "$292,403", "$1,951", "", ""],
        ["7", "$296,312", "$1,977", "", "", "$292,152", "$1,949", "", ""],
        ["8", "$296,086", "$1,975", "", "", "$291,298", "$1,948", "$600.00", "$5,000"],
        ["9", "$295,759", "$1,974", "$100.00", "$863", "$291,039", "$1,942", "", ""],
        ["10", "$295,529", "$1,972", "", "", "$290,728", "$1,940", "$50.00", ""],
        ["11", "$295,298", "$1,970", "", "", "$290,444", "$1,938", "$20.00", ""],
        ["12", "$294,565", "$1,969", "$500.00", "$4,182", "$290,179", "$1,936", "", ""],
    ];
    months.forEach((m, i) => {
        sheetRows.push({ n: String(20 + i), cells: {
            B: c(m[0], right, purple), C: c(m[1], money, purple), D: c(m[2], money, orange), E: c("$2,201", money, pink), F: c(m[3], money, green),
            J: c(m[4], "justify-end pr-px"), K: c(m[5], money, purple), L: c(m[6], money, orange), M: c("$2,201", money, pink), N: c(m[7], money, green), O: c(m[8], right)
        } });
    });
    sheetRows.push({ n: "33", cells: {} });
    sheetRows.push({ n: "34", cells: {} });

    function rowHeader(n) {
        if (n === "30") {
            return '<td class="p-0 h-[17px] border-r border-b border-r-black border-b-[#a0a0a0] bg-[linear-gradient(90deg,#5b62b4_55%,#000080_70%)] text-white font-bold text-center">30</td>';
        }
        let edge = (n === "10" || n === "31") ? "border-b-black" : "border-b-[#a6a6a6]";
        let extra = n === "10" ? "border-b-2" : "border-b";
        return `<td class="p-0 border-r border-r-black ${extra} ${edge} bg-[linear-gradient(90deg,#d6d6d6_55%,#bcbcbc_72%)] text-[#444] text-center overflow-hidden"><div class="${n === "1" ? "h-[7px] leading-[7px] overflow-hidden" : ""}">${n}</div></td>`;
    }

    let html = '<tr><td class="p-0 h-[19px] border-r border-b border-black bg-[linear-gradient(#d6d6d6_55%,#bcbcbc_55%)]"></td>';
    cols.forEach(col => {
        let sep = col === "B" ? "border-r-2" : "border-r";
        if (col === "N") {
            html += `<td class="p-0 border-r border-b border-black bg-[linear-gradient(#5b62b4_55%,#000080_55%)] text-white font-bold text-center">N</td>`;
        } else {
            html += `<td class="p-0 ${sep} border-b border-black bg-[linear-gradient(#d6d6d6_55%,#bcbcbc_55%)] text-[#444] text-center">${col}</td>`;
        }
    });
    html += "</tr>";

    sheetRows.forEach(row => {
        html += `<tr>${rowHeader(row.n)}`;
        let afterBreak = Number(row.n) >= 17 && Number(row.n) <= 19;
        cols.forEach(col => {
            let cell = row.cells[col];
            if (cell === null) return;
            cell = cell || c("", left);
            let lines = "border-r border-b border-[#c0c0c0]";
            if (col === "B") lines = "border-r-2 border-b border-[#c0c0c0] border-r-black";
            if (col === "J" && afterBreak) lines = "border-r border-b border-[#c0c0c0] border-r-black";
            let below = "";
            if (row.n === "31" && col !== "A" && col !== "B") below = "border-b-black";
            let attrs = (cell.span ? ` colspan="${cell.span}"` : "") + (cell.rows ? ` rowspan="${cell.rows}"` : "");
            if (cell.congrats) {
                html += `<td${attrs} class="p-0 ${lines} text-center align-middle"><span class="italic font-bold text-[26px] text-[#800080] leading-[30px]">Congratulations!</span></td>`;
                return;
            }
            let inner = row.inner || "";
            let height = row.td || "h-[17px]";
            html += `<td${attrs} class="p-0 ${height} ${lines} ${below} ${cell.fill} ${cell.bold} align-top"><div class="flex whitespace-nowrap text-center ${cell.align} ${inner}"><span>${cell.text || ""}</span></div></td>`;
        });
        html += "</tr>";
    });
    document.getElementById("rows").innerHTML = html;
</script>
</body>
</html>
